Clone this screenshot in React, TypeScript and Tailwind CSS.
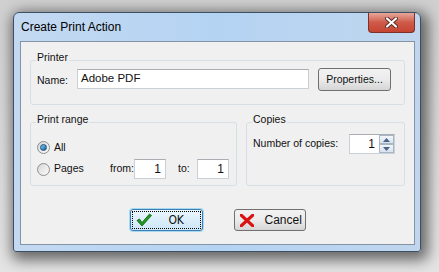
import React from "react";

const ui = { fontFamily: '"Liberation Sans", Arial, sans-serif' };

function CheckIcon() {
  return (
    <svg width="16" height="14" viewBox="0 0 16 14">
      <path d="M1 7.5 L3.5 6 L6 9.5 L13.5 1 L15.5 2.5 L6 13 Z" fill="#1f9a1f" stroke="#0b5e0b" strokeWidth="0.8" strokeLinejoin="round" />
    </svg>
  );
}

function CrossIcon() {
  return (
    <svg width="14" height="13" viewBox="0 0 14 13">
      <path d="M1 1 L13 12 M13 1 L1 12" stroke="#d81414" strokeWidth="3.2" strokeLinecap="square" />
    </svg>
  );
}

function Radio({ checked }: { checked?: boolean }) {
  return (
    <span className="w-[13px] h-[13px] rounded-full border border-[#8e8f8f] bg-gradient-to-br from-[#d6d6d6] to-[#fbfbfb] flex items-center justify-center">
      {checked && (
        <span className="w-[7px] h-[7px] rounded-full bg-gradient-to-br from-[#7fd0f5] to-[#0d5e9c] border border-[#1c4f82]" />
      )}
    </span>
  );
}

function Group({ label, className, children }: { label: string; className?: string; children: React.ReactNode }) {
  return (
    <div className={`relative border border-[#d5dfe5] rounded-[3px] ${className ?? ""}`}>
      <span className="absolute -top-[10px] left-[5px] bg-[#f0f0f0] px-[1px] leading-[13px]">{label}</span>
      {children}
    </div>
  );
}

function Field({ value, className }: { value: string; className?: string }) {
  return (
    <div className={`h-[20px] bg-white border border-[#c9d0d8] border-t-[#abadb3] flex items-center ${className ?? ""}`}>
      {value}
    </div>
  );
}

function Button({ children, className }: { children: React.ReactNode; className?: string }) {
  return (
    <div className={`rounded-[3px] border border-[#707070] bg-gradient-to-b from-[#f2f2f2] via-[#ebebeb] to-[#d5d5d5] flex items-center ${className ?? ""}`}>
      {children}
    </div>
  );
}

export default function App() {
  return (
    <div className="w-[439px] h-[272px] bg-gradient-to-b from-[#d0d0d0] to-[#e4e4e4] pl-[13px] pt-[12px] text-[10.5px] text-[#111] overflow-hidden" style={ui}>
      <div className="w-[408px] h-[240px] flex flex-col rounded-t-[6px] rounded-b-[3px] border border-[#3d4f63] bg-gradient-to-r from-[#c3d9f1] via-[#b4d3f3] to-[#c0d6ee] shadow-[3px_4px_14px_4px_rgba(0,0,0,0.55)]">
        {/* title bar */}
        <div className="h-[28px] flex items-start pl-[7px] pr-[5px]">
          <span className="mt-[7px] text-[12px] leading-[15px] text-black">Create Print Action</span>
          <div className="ml-auto w-[47px] h-[20px] rounded-b-[4px] border border-t-0 border-[#7d2f28] bg-gradient-to-b from-[#e5a79c] via-[#cf5a48] to-[#c54432] flex items-center justify-center">
            <svg width="13" height="11" viewBox="0 0 13 11">
              <path d="M2 1.5 L11 9.5 M11 1.5 L2 9.5" stroke="#5a2a25" strokeWidth="4" strokeLinecap="round" />
              <path d="M2 1.5 L11 9.5 M11 1.5 L2 9.5" stroke="#ffffff" strokeWidth="2.2" strokeLinecap="round" />
            </svg>
          </div>
        </div>

        {/* client area */}
        <div className="ml-[6px] mr-[5px] h-[204px] border border-[#8493a6] bg-[#f0f0f0] px-[9px] pt-[18px] flex flex-col">
          <Group label="Printer" className="h-[45px] flex items-start pt-[8px] pl-[6px]">
            <span className="mt-[4px] w-[40px]">Name:</span>
            <Field value="Adobe PDF" className="w-[232px] pl-[3px] text-[11.5px]" />
            <Button className="ml-[9px] -mt-[1px] w-[73px] h-[23px] justify-center">Properties...</Button>
          </Group>

          <div className="mt-[17px] flex gap-[9px]">
            <Group label="Print range" className="w-[207px] h-[64px] pl-[6px] pt-[18px]">
              <div className="flex items-center gap-[4px] h-[13px]">
                <Radio checked />
                <span>All</span>
              </div>
              <div className="flex items-center mt-[5px]">
                <div className="flex items-center gap-[4px] w-[73px]">
                  <Radio />
                  <span>Pages</span>
                </div>
                <span className="w-[24px]">from:</span>
                <Field value="1" className="w-[32px] justify-end pr-[4px] text-[12px]" />
                <span className="ml-[12px] w-[19px]">to:</span>
                <Field value="1" className="w-[32px] justify-end pr-[4px] text-[12px]" />
              </div>
            </Group>

            <Group label="Copies" className="w-[159px] h-[64px] pl-[6px] pt-[11px]">
              <div className="flex items-center">
                <span className="w-[96px]">Number of copies:</span>
                <div className="w-[46px] h-[20px] bg-white border border-[#c9d0d8] border-t-[#abadb3] flex">
                  <span className="flex-1 text-right pr-[4px] text-[12px] leading-[18px]">1</span>
                  <div className="w-[15px] flex flex-col">
                    <div className="h-[9px] border border-[#a9b6c6] bg-gradient-to-b from-[#f3f6fa] to-[#d8e2ee] flex items-center justify-center">
                      <svg width="7" height="4" viewBox="0 0 7 4"><path d="M0 4 L3.5 0 L7 4 Z" fill="#4d6185" /></svg>
                    </div>
                    <div className="h-[9px] border border-[#a9b6c6] bg-gradient-to-b from-[#f3f6fa] to-[#d8e2ee] flex items-center justify-center">
                      <svg width="7" height="4" viewBox="0 0 7 4"><path d="M0 0 L3.5 4 L7 0 Z" fill="#4d6185" /></svg>
                    </div>
                  </div>
                </div>
              </div>
            </Group>
          </div>

          <div className="mt-[23px] flex justify-center gap-[31px]">
            <div className="w-[73px] h-[22px] rounded-[3px] border border-[#3c7fb1] bg-gradient-to-b from-[#eaf6fd] to-[#cde6f7] p-[1px] shadow-[0_0_0_1px_#a6d7f3]">
              <div className="h-full border border-dotted border-black flex items-center pl-[3px]">
                <CheckIcon />
                <span className="ml-[17px] text-[12px] tracking-tight" style={{ fontFamily: '"DejaVu Sans Condensed", "Liberation Sans Narrow", sans-serif' }}>OK</span>
              </div>
            </div>
            <Button className="w-[72px] h-[22px] pl-[5px]">
              <CrossIcon />
              <span className="ml-[11px] text-[12px]">Cancel</span>
            </Button>
          </div>
        </div>
      </div>
    </div>
  );
}
